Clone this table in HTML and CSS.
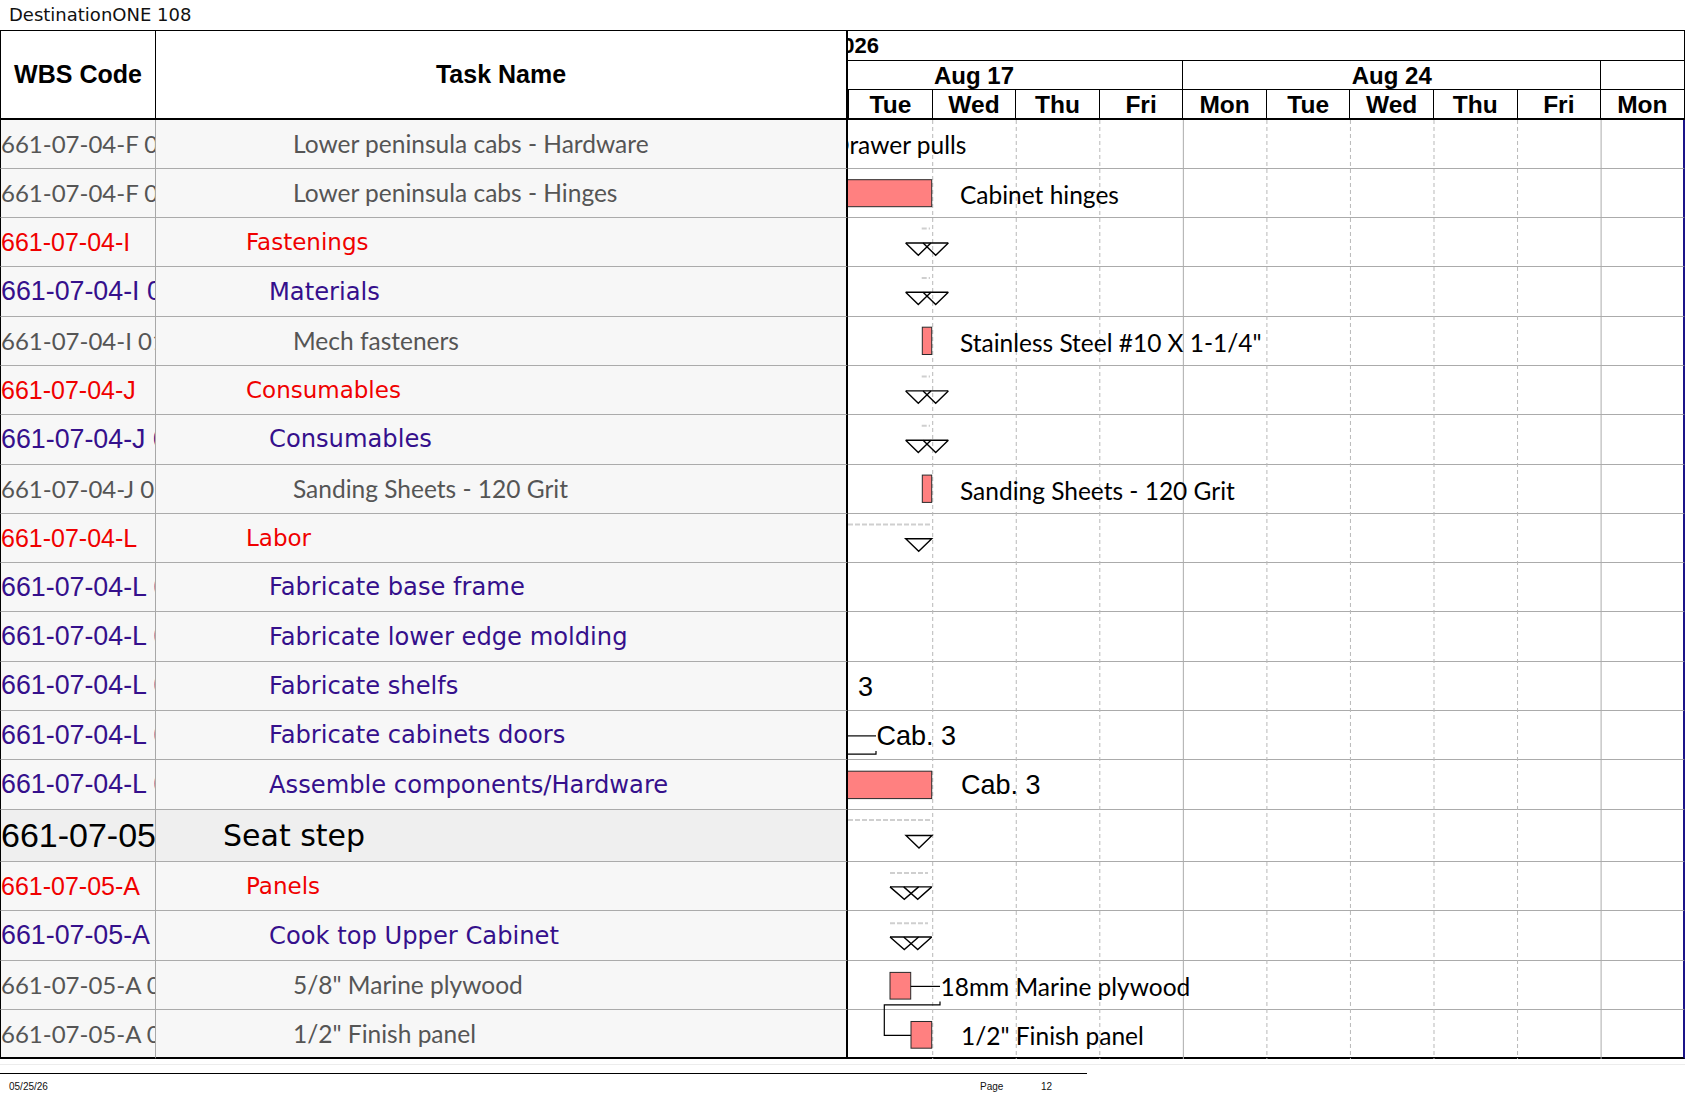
FILE: index.html
```html
<!DOCTYPE html>
<html>
<head>
<meta charset="utf-8">
<title>DestinationONE 108</title>
<link rel="stylesheet" href="styles.css">
</head>
<body>
<div class="title">DestinationONE 108</div>
<div class="sheet">
  <div class="head">
    <div class="hcell wbs-h">WBS Code</div>
    <div class="hcell task-h">Task Name</div>
    <div class="timescale">
      <div class="ts-year"><span>2026</span></div>
      <div class="ts-weeks">
        <div class="week">Aug 17</div>
        <div class="week">Aug 24</div>
        <div class="week">Aug 31</div>
      </div>
      <div class="ts-days">
        <div class="day">Mon</div><div class="day">Tue</div><div class="day">Wed</div><div class="day">Thu</div><div class="day">Fri</div>
        <div class="day">Mon</div><div class="day">Tue</div><div class="day">Wed</div><div class="day">Thu</div><div class="day">Fri</div>
        <div class="day">Mon</div><div class="day">Tue</div>
      </div>
    </div>
  </div>
  <div class="body">
    <div class="row l4"><div class="wbs">661-07-04-F 01.04</div><div class="task">Lower peninsula cabs - Hardware</div><div class="gcell"></div></div>
    <div class="row l4"><div class="wbs">661-07-04-F 01.05</div><div class="task">Lower peninsula cabs - Hinges</div><div class="gcell"></div></div>
    <div class="row l2"><div class="wbs">661-07-04-I</div><div class="task">Fastenings</div><div class="gcell"></div></div>
    <div class="row l3"><div class="wbs">661-07-04-I 01</div><div class="task">Materials</div><div class="gcell"></div></div>
    <div class="row l4"><div class="wbs">661-07-04-I 01.01</div><div class="task">Mech fasteners</div><div class="gcell"></div></div>
    <div class="row l2"><div class="wbs">661-07-04-J</div><div class="task">Consumables</div><div class="gcell"></div></div>
    <div class="row l3"><div class="wbs">661-07-04-J 01</div><div class="task">Consumables</div><div class="gcell"></div></div>
    <div class="row l4"><div class="wbs">661-07-04-J 01.01</div><div class="task">Sanding Sheets - 120 Grit</div><div class="gcell"></div></div>
    <div class="row l2"><div class="wbs">661-07-04-L</div><div class="task">Labor</div><div class="gcell"></div></div>
    <div class="row l3"><div class="wbs">661-07-04-L 01</div><div class="task">Fabricate base frame</div><div class="gcell"></div></div>
    <div class="row l3"><div class="wbs">661-07-04-L 02</div><div class="task">Fabricate lower edge molding</div><div class="gcell"></div></div>
    <div class="row l3"><div class="wbs">661-07-04-L 03</div><div class="task">Fabricate shelfs</div><div class="gcell"></div></div>
    <div class="row l3"><div class="wbs">661-07-04-L 04</div><div class="task">Fabricate cabinets doors</div><div class="gcell"></div></div>
    <div class="row l3"><div class="wbs">661-07-04-L 05</div><div class="task">Assemble components/Hardware</div><div class="gcell"></div></div>
    <div class="row l1"><div class="wbs">661-07-05</div><div class="task">Seat step</div><div class="gcell"></div></div>
    <div class="row l2"><div class="wbs">661-07-05-A</div><div class="task">Panels</div><div class="gcell"></div></div>
    <div class="row l3"><div class="wbs">661-07-05-A 01</div><div class="task">Cook top Upper Cabinet</div><div class="gcell"></div></div>
    <div class="row l4"><div class="wbs">661-07-05-A 01.01</div><div class="task">5/8" Marine plywood</div><div class="gcell"></div></div>
    <div class="row l4 last"><div class="wbs">661-07-05-A 01.02</div><div class="task">1/2" Finish panel</div><div class="gcell"></div></div>

    <svg class="chart" width="837" height="939.9" viewBox="0 0 837 939.9">
      <g class="grid-dash">
        <line x1="84.7" y1="0" x2="84.7" y2="939.9"/>
        <line x1="168.25" y1="0" x2="168.25" y2="939.9"/>
        <line x1="251.8" y1="0" x2="251.8" y2="939.9"/>
        <line x1="418.9" y1="0" x2="418.9" y2="939.9"/>
        <line x1="502.45" y1="0" x2="502.45" y2="939.9"/>
        <line x1="586" y1="0" x2="586" y2="939.9"/>
        <line x1="669.55" y1="0" x2="669.55" y2="939.9"/>
      </g>
      <g class="grid-solid">
        <line x1="335.35" y1="0" x2="335.35" y2="939.9"/>
        <line x1="753.1" y1="0" x2="753.1" y2="939.9"/>
      </g>

      <!-- r0 -->
      <text class="lbl" x="-17" y="24.6">Drawer pulls</text>
      <!-- r1 -->
      <rect class="bar" x="-5" y="59.7" width="88.7" height="27"/>
      <text class="lbl" x="112" y="74.1">Cabinet hinges</text>
      <!-- r2 -->
      <line class="sumdash" x1="73.7" y1="108.6" x2="82" y2="108.6"/>
      <polyline class="tri" points="57.7,123 100.3,123"/>
      <polyline class="tri" points="57.7,123 70.3,135.3 82.9,123"/>
      <polyline class="tri" points="75.1,123 87.7,135.3 100.3,123"/>
      <!-- r3 -->
      <line class="sumdash" x1="73.7" y1="157.9" x2="82" y2="157.9"/>
      <polyline class="tri" points="57.7,172.3 100.3,172.3"/>
      <polyline class="tri" points="57.7,172.3 70.3,184.6 82.9,172.3"/>
      <polyline class="tri" points="75.1,172.3 87.7,184.6 100.3,172.3"/>
      <!-- r4 -->
      <rect class="bar" x="74.3" y="207.2" width="9.4" height="27.3"/>
      <text class="lbl" x="112" y="222.2">Stainless Steel #10 X 1-1/4"</text>
      <!-- r5 -->
      <line class="sumdash" x1="73.7" y1="256.5" x2="82" y2="256.5"/>
      <polyline class="tri" points="57.7,270.9 100.3,270.9"/>
      <polyline class="tri" points="57.7,270.9 70.3,283.2 82.9,270.9"/>
      <polyline class="tri" points="75.1,270.9 87.7,283.2 100.3,270.9"/>
      <!-- r6 -->
      <line class="sumdash" x1="73.7" y1="305.8" x2="82" y2="305.8"/>
      <polyline class="tri" points="57.7,320.2 100.3,320.2"/>
      <polyline class="tri" points="57.7,320.2 70.3,332.5 82.9,320.2"/>
      <polyline class="tri" points="75.1,320.2 87.7,332.5 100.3,320.2"/>
      <!-- r7 -->
      <rect class="bar" x="74.3" y="355.1" width="9.4" height="27.3"/>
      <text class="lbl" x="112" y="370.1">Sanding Sheets - 120 Grit</text>
      <!-- r8 -->
      <line class="sumdash" x1="0" y1="404.6" x2="83" y2="404.6"/>
      <polygon class="tri" points="57.7,418.8 83.7,418.8 70.7,431.3"/>
      <!-- r11 -->
      <text class="arial" x="10" y="567.1">3</text>
      <!-- r12 -->
      <line class="conn" x1="0" y1="615.9" x2="28" y2="615.9"/>
      <text class="arial" x="28.5" y="615.9">Cab. 3</text>
      <polyline class="conn" points="0,634.2 28,634.2 28,630.9"/>
      <!-- r13 -->
      <rect class="bar" x="-5" y="651.2" width="88.7" height="27.4"/>
      <text class="arial" x="113" y="665.3">Cab. 3</text>
      <!-- r14 -->
      <line class="sumdash" x1="0" y1="699.9" x2="83" y2="699.9"/>
      <polygon class="tri" points="58,715.5 84,715.5 71,728"/>
      <!-- r15 -->
      <line class="sumdash" x1="42" y1="752.9" x2="80" y2="752.9"/>
      <polyline class="tri" points="42,766.9 83.7,766.9"/>
      <polyline class="tri" points="42,766.9 56.3,779.4 70.6,766.9"/>
      <polyline class="tri" points="55.7,766.9 69.7,779.4 83.7,766.9"/>
      <!-- r16 -->
      <line class="sumdash" x1="42" y1="803.3" x2="80" y2="803.3"/>
      <polyline class="tri" points="42,817 83.7,817"/>
      <polyline class="tri" points="42,817 56.3,829.5 70.6,817"/>
      <polyline class="tri" points="55.7,817 69.7,829.5 83.7,817"/>
      <!-- r17 -->
      <rect class="bar" x="42" y="852.4" width="20.7" height="26.7"/>
      <line class="conn" x1="62.7" y1="866.4" x2="92" y2="866.4"/>
      <text class="lbl" x="92.5" y="866.9">18mm Marine plywood</text>
      <polyline class="conn" points="92,881.4 92,884.8 36.3,884.8 36.3,915.4 63,915.4"/>
      <!-- r18 -->
      <rect class="bar" x="63" y="901.5" width="20.7" height="26.7"/>
      <text class="lbl" x="113" y="915.5">1/2" Finish panel</text>
    </svg>
  </div>
</div>
<div class="ghost"></div>
<div class="footer">
  <div class="f-date">05/25/26</div>
  <div class="f-page">Page</div>
  <div class="f-num">12</div>
</div>
</body>
</html>
```

FILE: styles.css
```css
:root {
  --day: 83.55px;
  --gray-font: "Lato", "Open Sans", sans-serif;
  --verd: "DejaVu Sans", "Liberation Sans", sans-serif;
  --arial: "Liberation Sans", Arial, sans-serif;
}

html, body {
  margin: 0;
  padding: 0;
  background: #fff;
}

body {
  width: 1687px;
  height: 1097px;
  overflow: hidden;
  font-family: var(--arial);
  color: #000;
}

.title {
  height: 30px;
  line-height: 30px;
  padding-left: 9px;
  font-family: var(--verd);
  font-size: 18px;
  color: #111;
}

.sheet {
  width: 1685px;
  border-top: 1px solid #000;
}

/* ---------- header ---------- */
.head {
  display: grid;
  grid-template-columns: 156px 692px 837px;
  height: 86.5px;
  border-bottom: 2px solid #000;
}

.hcell {
  display: flex;
  align-items: center;
  justify-content: center;
  font-family: var(--arial);
  font-weight: bold;
  font-size: 25px;
  box-sizing: border-box;
}

.wbs-h {
  border-left: 1px solid #000;
  border-right: 1px solid #000;
}

.task-h {
  border-right: 2px solid #000;
}

.timescale {
  overflow: hidden;
  box-sizing: border-box;
  border-right: 1px solid #000;
  font-family: var(--arial);
  font-weight: bold;
  white-space: nowrap;
}

.ts-year {
  height: 30px;
  box-sizing: border-box;
  border-bottom: 1px solid #000;
  font-size: 22px;
  line-height: 29px;
}

.ts-year span {
  display: inline-block;
  margin-left: -18px;
}

.ts-weeks {
  display: flex;
  height: 28.5px;
  box-sizing: border-box;
  border-bottom: 1px solid #000;
  margin-left: -82.4px;
}

.week {
  flex: 0 0 calc(var(--day) * 5);
  box-sizing: border-box;
  border-right: 1px solid #000;
  text-align: center;
  font-size: 24px;
  line-height: 30px;
}

.ts-days {
  display: flex;
  height: 28px;
  margin-left: -82.4px;
}

.day {
  flex: 0 0 var(--day);
  box-sizing: border-box;
  border-right: 1px solid #000;
  text-align: center;
  font-size: 24.5px;
  line-height: 30px;
}

/* ---------- body ---------- */
.body {
  position: relative;
}

.row {
  display: grid;
  grid-template-columns: 156px 692px 837px;
  height: 49.3px;
}

.row > div {
  box-sizing: border-box;
  border-bottom: 1px solid #ababab;
  display: flex;
  align-items: center;
  white-space: nowrap;
  overflow: hidden;
}

.row.last > div {
  border-bottom: 2px solid #000;
}

.wbs {
  border-left: 1px solid #000;
  border-right: 1px solid #a8a8a8;
  background: #f7f7f7;
}

.task {
  border-right: 2px solid #000;
  background: #f7f7f7;
}

.gcell {
  background: #fff;
  border-right: 2px solid #1b1488;
}

/* levels */
.l4 .wbs {
  font-family: var(--gray-font);
  font-size: 24px;
  color: #555;
}
.l4 .task {
  font-family: var(--gray-font);
  font-size: 24.5px;
  color: #555;
  padding-left: 137px;
}

.l3 .wbs {
  font-family: var(--arial);
  font-size: 26.8px;
  color: #35108c;
}
.l3 .task {
  font-family: var(--verd);
  font-size: 24.2px;
  color: #35108c;
  padding-left: 113px;
}

.l2 .wbs {
  font-family: var(--arial);
  font-size: 25px;
  color: #f00000;
}
.l2 .task {
  font-family: var(--verd);
  font-size: 23px;
  color: #f00000;
  padding-left: 90px;
}

.row.l1 {
  height: 52.5px;
}
.l1 .wbs {
  font-family: var(--arial);
  font-size: 34px;
  color: #000;
  background: #efefef;
}
.l1 .task {
  font-family: var(--verd);
  font-size: 30px;
  color: #000;
  background: #efefef;
  padding-left: 67px;
}

/* ---------- chart overlay ---------- */
.chart {
  position: absolute;
  left: 848px;
  top: 0;
  overflow: hidden;
  pointer-events: none;
}

.grid-dash line {
  stroke: #b8b8b8;
  stroke-width: 1;
  stroke-dasharray: 4 3;
}

.grid-solid line {
  stroke: #ababab;
  stroke-width: 1;
}

.bar {
  fill: #ff8080;
  stroke: #2a2a2a;
  stroke-width: 1;
}

.tri {
  fill: none;
  stroke: #000;
  stroke-width: 1.4;
  stroke-linejoin: miter;
}

polygon.tri {
  fill: #fff;
}

.sumdash {
  stroke: #cfcfcf;
  stroke-width: 2;
  stroke-dasharray: 5 2;
}

.conn {
  fill: none;
  stroke: #000;
  stroke-width: 1.2;
}

.lbl {
  font-family: var(--gray-font);
  font-size: 24.5px;
  fill: #000;
  dominant-baseline: central;
}

.arial {
  font-family: var(--arial);
  font-size: 27px;
  fill: #000;
  dominant-baseline: central;
}

/* ---------- footer ---------- */
.ghost {
  width: 1685px;
  margin-top: 5px;
  border-top: 1px solid #ececec;
}

.footer {
  width: 1087px;
  margin-top: 8px;
  border-top: 1.5px solid #000;
  height: 24px;
  display: flex;
  align-items: center;
  font-family: var(--arial);
  font-size: 10px;
  color: #111;
}

.f-date {
  flex: 1;
  padding-left: 9px;
}

.f-page {
  width: 61px;
}

.f-num {
  width: 46px;
}
```
